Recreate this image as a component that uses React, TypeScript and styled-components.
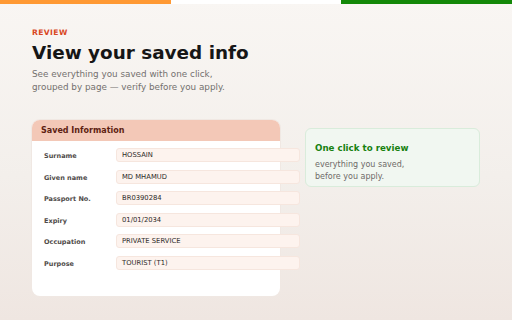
import React from 'react'
import styled, { createGlobalStyle } from 'styled-components'

const GlobalStyle = createGlobalStyle`
  html, body {
    margin: 0;
    padding: 0;
  }
  body {
    font-family: 'DejaVu Sans', 'Liberation Sans', sans-serif;
    width: 512px;
    height: 320px;
    overflow: hidden;
  }
`

const FIELDS = [
  { label: 'Surname', value: 'HOSSAIN' },
  { label: 'Given name', value: 'MD MHAMUD' },
  { label: 'Passport No.', value: 'BR0390284' },
  { label: 'Expiry', value: '01/01/2034' },
  { label: 'Occupation', value: 'PRIVATE SERVICE' },
  { label: 'Purpose', value: 'TOURIST (T1)' },
]

export default function App(): React.ReactElement {
  return (
    <>
      <GlobalStyle />
      <Page>
        <FlagBar>
          <Stripe color='#ff9933' />
          <Stripe color='#ffffff' />
          <Stripe color='#138808' />
        </FlagBar>
        <Content>
          <Eyebrow>REVIEW</Eyebrow>
          <Title>View your saved info</Title>
          <Subtitle>
            See everything you saved with one click,
            <br />
            grouped by page — verify before you apply.
          </Subtitle>
          <Columns>
            <InfoCard>
              <CardHeader>Saved Information</CardHeader>
              <FieldList>
                {FIELDS.map((f) => (
                  <FieldRow key={f.label}>
                    <FieldLabel>{f.label}</FieldLabel>
                    <FieldValue>{f.value}</FieldValue>
                  </FieldRow>
                ))}
              </FieldList>
            </InfoCard>
            <Callout>
              <CalloutTitle>One click to review</CalloutTitle>
              <CalloutText>
                everything you saved,
                <br />
                before you apply.
              </CalloutText>
            </Callout>
          </Columns>
        </Content>
      </Page>
    </>
  )
}

const Page = styled.div`
  width: 512px;
  height: 320px;
  background: linear-gradient(180deg, #f9f6f3 0%, #f3efeb 55%, #efe6e1 100%);
  display: flex;
  flex-direction: column;
`

const FlagBar = styled.div`
  display: flex;
  height: 4px;
`

const Stripe = styled.div<{ color: string }>`
  flex: 1;
  background: ${(p) => p.color};
`

const Content = styled.div`
  padding: 24px 32px 0;
  display: flex;
  flex-direction: column;
`

const Eyebrow = styled.div`
  font-size: 7.6px;
  font-weight: 700;
  letter-spacing: 0.4px;
  color: #d9471f;
  line-height: 10px;
`

const Title = styled.h1`
  margin: 3px 0 0;
  font-size: 18.4px;
  font-weight: 700;
  line-height: 24px;
  color: #161616;
`

const Subtitle = styled.p`
  margin: 3px 0 0;
  font-size: 8.8px;
  line-height: 13px;
  color: #73706e;
`

const Columns = styled.div`
  display: flex;
  align-items: flex-start;
  gap: 25px;
  margin-top: 26px;
`

const InfoCard = styled.div`
  width: 248px;
  height: 176px;
  background: #ffffff;
  border-radius: 8px;
  box-shadow: 0 0 0 1px #f0e8e3;
  flex-shrink: 0;
`

const CardHeader = styled.div`
  height: 21px;
  background: #f3c8b7;
  border-radius: 8px 8px 0 0;
  padding-left: 9px;
  display: flex;
  align-items: center;
  font-size: 8px;
  font-weight: 700;
  color: #5e1f12;
`

const FieldList = styled.div`
  display: flex;
  flex-direction: column;
  gap: 7.6px;
  padding: 7px 0 0 12px;
`

const FieldRow = styled.div`
  display: flex;
  align-items: center;
`

const FieldLabel = styled.div`
  width: 72px;
  flex-shrink: 0;
  font-size: 6.5px;
  font-weight: 700;
  color: #4f4b49;
  padding-top: 2px;
`

const FieldValue = styled.div`
  width: 184px;
  flex-shrink: 0;
  height: 14px;
  box-sizing: border-box;
  background: #fdf3ee;
  border: 1px solid #f6e6de;
  border-radius: 3px;
  padding-left: 5px;
  display: flex;
  align-items: center;
  font-size: 6.8px;
  color: #2f2b29;
`

const Callout = styled.div`
  width: 175px;
  height: 59px;
  box-sizing: border-box;
  margin-top: 8px;
  background: #f1f7f1;
  border: 1px solid #d9ecdb;
  border-radius: 6px;
  padding: 13px 9px 0;
`

const CalloutTitle = styled.div`
  font-size: 8.7px;
  font-weight: 700;
  color: #17810f;
  line-height: 12px;
`

const CalloutText = styled.div`
  margin-top: 5px;
  font-size: 8px;
  line-height: 12px;
  color: #6e6a68;
`
